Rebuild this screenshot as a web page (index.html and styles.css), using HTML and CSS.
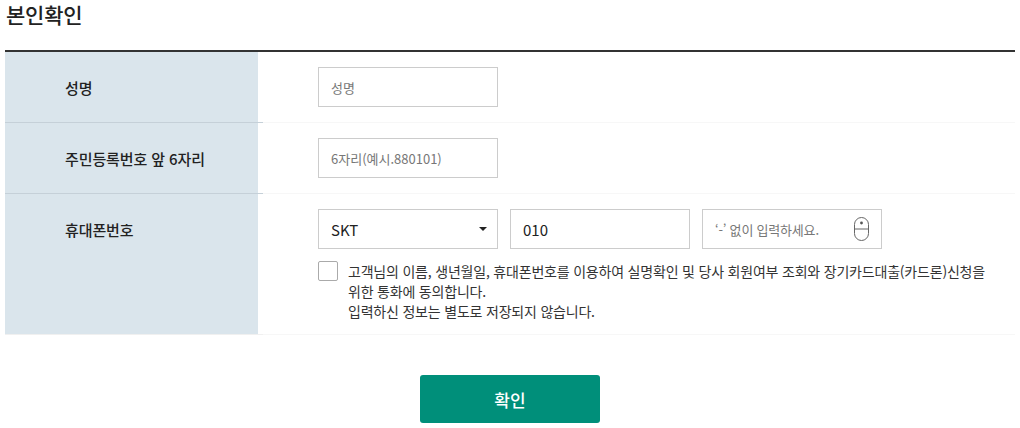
FILE: index.html
```html
<!DOCTYPE html>
<html lang="ko">
<head>
    <meta charset="UTF-8">
    <meta name="viewport" content="width=device-width, initial-scale=1.0">
    <title>본인확인</title>
    <link rel="stylesheet" href="styles.css">
</head>
<body>
    <div class="container">
        <h1>본인확인</h1>

        <div class="form-table">
            <div class="form-row">
                <div class="form-label">성명</div>
                <div class="form-field">
                    <input class="text-input" type="text" placeholder="성명">
                </div>
            </div>
            <div class="form-row">
                <div class="form-label">주민등록번호 앞 6자리</div>
                <div class="form-field">
                    <input class="text-input" type="text" placeholder="6자리(예시.880101)">
                </div>
            </div>
            <div class="form-row">
                <div class="form-label">휴대폰번호</div>
                <div class="form-field field-phone">
                    <div class="phone-group">
                        <div class="select-box">
                            <span>SKT</span>
                            <span class="select-arrow"></span>
                        </div>
                        <input class="text-input phone-prefix" type="text" value="010">
                        <div class="secure-input">
                            <input class="text-input" type="text" placeholder="‘-’ 없이 입력하세요.">
                            <svg class="mouse-icon" width="15" height="24" viewBox="0 0 15 24" fill="none" stroke="#666" stroke-width="1">
                                <rect x="0.5" y="0.5" width="14" height="23" rx="7"></rect>
                                <path d="M0.5 12H14.5"></path>
                                <circle cx="7.5" cy="6" r="1.4" fill="#555" stroke="none"></circle>
                            </svg>
                        </div>
                    </div>
                    <label class="agree">
                        <span class="agree-check"></span>
                        <span class="agree-text">고객님의 이름, 생년월일, 휴대폰번호를 이용하여 실명확인 및 당사 회원여부 조회와 장기카드대출(카드론)신청을 위한 통화에 동의합니다.<br>입력하신 정보는 별도로 저장되지 않습니다.</span>
                    </label>
                </div>
            </div>
        </div>

        <div class="btn-area">
            <button class="confirm-btn" type="button">확인</button>
        </div>
    </div>
</body>
</html>
```

FILE: styles.css
```css
* {
    margin: 0;
    padding: 0;
    box-sizing: border-box;
}

body {
    font-family: "Noto Sans CJK KR", "Noto Sans", sans-serif;
    background-color: #fff;
    color: #222;
}

.container {
    padding: 0 5px;
}

h1 {
    height: 50px;
    margin-left: 1px;
    font-size: 21px;
    font-weight: 500;
    letter-spacing: -0.2px;
    line-height: 28px;
    color: #222;
}

.form-table {
    border-top: 2px solid #333;
}

.form-row {
    position: relative;
    display: flex;
    border-bottom: 1px solid #f7f7f7;
}

/* the darker part of the divider runs a little past the label column */
.form-row::after {
    content: "";
    position: absolute;
    left: 0;
    bottom: -1px;
    width: 258px;
    height: 1px;
    background-color: #c5d0d8;
}

.form-row:last-child::after {
    background-color: #f0f0f0;
}

.form-label {
    flex: 0 0 253px;
    padding: 25px 0 0 60px;
    background-color: #dae5ec;
    font-size: 15px;
    font-weight: 500;
    letter-spacing: -0.1px;
    line-height: 22px;
}

.form-field {
    flex: 1;
    padding: 15px 25px 15px 60px;
}

.field-phone {
    padding-bottom: 13px;
}

.text-input {
    display: block;
    width: 180px;
    height: 40px;
    padding: 0 12px;
    border: 1px solid #ccc;
    border-radius: 0;
    outline: none;
    font-family: inherit;
    font-size: 13px;
    color: #222;
}

.text-input::placeholder {
    color: #777;
    opacity: 1;
}

.phone-group {
    display: flex;
    gap: 12px;
}

.select-box {
    display: flex;
    align-items: center;
    justify-content: space-between;
    width: 180px;
    height: 40px;
    padding: 0 10px 0 12px;
    border: 1px solid #ccc;
    font-size: 15px;
}

.select-arrow {
    width: 0;
    height: 0;
    border-left: 4px solid transparent;
    border-right: 4px solid transparent;
    border-top: 4px solid #222;
}

.phone-prefix {
    font-size: 15px;
}

.secure-input {
    position: relative;
}

.secure-input .text-input::placeholder {
    letter-spacing: -0.2px;
}

.mouse-icon {
    position: absolute;
    top: 8px;
    right: 13px;
}

.agree {
    display: flex;
    gap: 10px;
    margin-top: 12px;
}

.agree-check {
    flex: 0 0 20px;
    height: 20px;
    border: 1px solid #aaa;
    border-radius: 2px;
}

.agree-text {
    font-size: 14px;
    letter-spacing: -0.2px;
    line-height: 20px;
    color: #333;
}

.btn-area {
    padding-top: 40px;
    text-align: center;
}

.confirm-btn {
    width: 180px;
    height: 48px;
    border: none;
    border-radius: 3px;
    background-color: #008f7a;
    color: #fff;
    font-family: inherit;
    font-size: 17px;
    font-weight: 500;
    cursor: pointer;
}
```
